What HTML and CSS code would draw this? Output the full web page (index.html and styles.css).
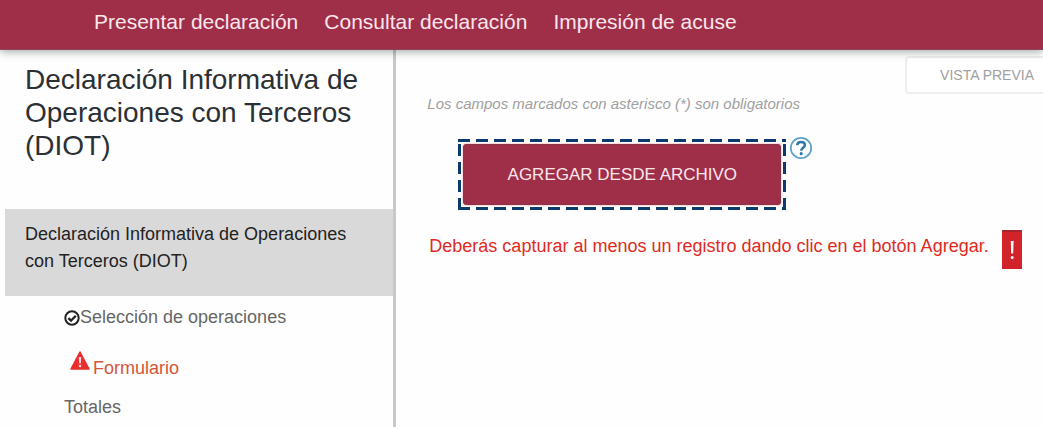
FILE: index.html
```html
<!DOCTYPE html>
<html lang="es">
<head>
  <meta charset="utf-8">
  <title>Declaración Informativa de Operaciones con Terceros</title>
  <link rel="stylesheet" href="styles.css">
</head>
<body>
  <nav class="navbar">
    <a href="#">Presentar declaración</a>
    <a href="#">Consultar declaración</a>
    <a href="#">Impresión de acuse</a>
  </nav>

  <div class="container">
    <aside class="sidebar">
      <h1 class="title">Declaración Informativa de Operaciones con Terceros (DIOT)</h1>
      <a class="section" href="#">Declaración Informativa de Operaciones con Terceros (DIOT)</a>
      <ul class="menu">
        <li>
          <a href="#"><svg class="check-icon" viewBox="0 0 16 16">
            <circle cx="8" cy="8" r="6.7" fill="none" stroke="#222" stroke-width="2"/>
            <path d="M4.4 8.2l2.6 2.5 4.8-5" fill="none" stroke="#222" stroke-width="2.3"/>
          </svg>Selección de operaciones</a>
        </li>
        <li class="error">
          <a href="#"><svg class="warning-icon" viewBox="0 0 20 19">
            <path d="M10 1L19 18H1z" fill="#e92c2c" stroke="#e92c2c" stroke-width="1.5" stroke-linejoin="round"/>
            <path d="M8.7 6h2.6l-.5 6.5H9.2z" fill="#fbd5d5"/>
            <circle cx="10" cy="15" r="1.3" fill="#fbd5d5"/>
          </svg>Formulario</a>
        </li>
        <li><a href="#">Totales</a></li>
      </ul>
    </aside>

    <main class="content">
      <button class="preview-btn" type="button">VISTA PREVIA</button>
      <p class="hint">Los campos marcados con asterisco (*) son obligatorios</p>

      <div class="upload">
        <div class="highlight">
          <button class="add-btn" type="button">AGREGAR DESDE ARCHIVO</button>
        </div>
        <svg class="help-icon" viewBox="0 0 24 24">
          <circle cx="12" cy="12" r="10.2" fill="#fff" stroke="#5fa3ca" stroke-width="1.8"/>
          <path d="M8.2 9.2C8.4 6.9 10 5.9 12 5.9c2.2 0 3.9 1.1 3.9 3.1 0 2.700-3.700 2.800-3.700 5.700" fill="none" stroke="#2c78ab" stroke-width="2.5"/>
          <circle cx="12.2" cy="17.7" r="1.6" fill="#2c78ab"/>
        </svg>
      </div>

      <div class="message">
        <span>Deberás capturar al menos un registro dando clic en el botón Agregar.</span>
        <svg class="alert-icon" viewBox="0 0 20 39">
          <path d="M0 0h20v39H0z" fill="#d2232a"/>
          <path d="M0 0h20v2H0z" fill="#a5262e"/>
          <path d="M8.8 11h2.800l-.4 12.500H9.200z" fill="#fff"/>
          <circle cx="10.200" cy="27.500" r="1.500" fill="#fff"/>
        </svg>
      </div>
    </main>
  </div>
</body>
</html>
```

FILE: styles.css
```css
* {
  box-sizing: border-box;
}
body {
  margin: 0;
  min-height: 100vh;
  display: flex;
  flex-direction: column;
  background: #fefefe;
  color: #222;
  font-family: "Liberation Sans", Arial, sans-serif;
  font-size: 18px;
}
a {
  color: inherit;
  text-decoration: none;
}

.navbar {
  position: relative;
  display: flex;
  gap: 26px;
  height: 50px;
  padding: 10px 94px;
  background: #9f2f49;
  border-bottom: 1px solid #8b4657;
  box-shadow: 0 2px 8px rgba(0, 20, 20, 0.35);
  color: #fbe6ec;
  font-size: 21px;
  line-height: 24px;
  white-space: nowrap;
}

.container {
  flex-grow: 1;
  display: flex;
}
.sidebar {
  width: 38%;
  flex-shrink: 0;
  padding-left: 5px;
  border-right: 3px solid #c8c8c8;
}
.title {
  margin: 0;
  padding: 13px 20px 47px;
  color: #2b3035;
  font-size: 28px;
  font-weight: normal;
  line-height: 33px;
}
.section {
  display: block;
  padding: 12px 20px 21px;
  background: #d9d9d9;
  line-height: 27px;
}
.menu {
  margin: 0;
  padding: 8px 0 0 59px;
  list-style: none;
  color: #666;
  line-height: 27px;
}
.menu a {
  display: flex;
  align-items: center;
}
.menu .error {
  padding: 20px 0 15px 6px;
  color: #d4553a;
}
.menu .error a {
  align-items: flex-end;
  gap: 3px;
  line-height: 21px;
}
.check-icon {
  width: 16px;
  height: 16px;
}
.warning-icon {
  width: 20px;
  height: 19px;
  margin-bottom: 9px;
}

.content {
  flex-grow: 1;
  display: flex;
  flex-direction: column;
  align-items: flex-start;
  padding: 6px 0 0 31px;
}
.preview-btn {
  align-self: flex-end;
  height: 38px;
  padding: 0 9px 0 33px;
  border: 2px solid #eee;
  border-right: 0;
  border-radius: 4px 0 0 4px;
  background: #fff;
  color: #a0a0a0;
  font: 14px "Liberation Sans", Arial, sans-serif;
}
.hint {
  margin: 0;
  color: #a0a0a0;
  font-size: 15px;
  font-style: italic;
  line-height: 20px;
}
.upload {
  display: flex;
  gap: 3px;
  padding: 22px 0 0 31px;
}
/* long dashes, 12px on and 6px off */
.highlight {
  margin-top: 3px;
  padding: 5px;
  background:
    repeating-linear-gradient(90deg, #0b3a6f 0 12px, transparent 12px 18px) top / 100% 3px no-repeat,
    repeating-linear-gradient(90deg, #0b3a6f 0 12px, transparent 12px 18px) bottom / 100% 3px no-repeat,
    repeating-linear-gradient(0deg, #0b3a6f 0 12px, transparent 12px 18px) left / 3px 100% no-repeat,
    repeating-linear-gradient(0deg, #0b3a6f 0 12px, transparent 12px 18px) right / 3px 100% no-repeat;
}
.add-btn {
  display: block;
  width: 318px;
  height: 61px;
  border: 1px solid #8b3449;
  border-radius: 3px;
  background: #9f2f49;
  box-shadow: 0 0 2px #f08098;
  color: #fbe6ec;
  font: 17px "Liberation Sans", Arial, sans-serif;
}
.help-icon {
  width: 24px;
  height: 24px;
}
.message {
  display: flex;
  gap: 13px;
  padding: 20px 0 0 2px;
  color: #e02a1f;
  line-height: 33px;
}
.alert-icon {
  width: 20px;
  height: 39px;
}
```
